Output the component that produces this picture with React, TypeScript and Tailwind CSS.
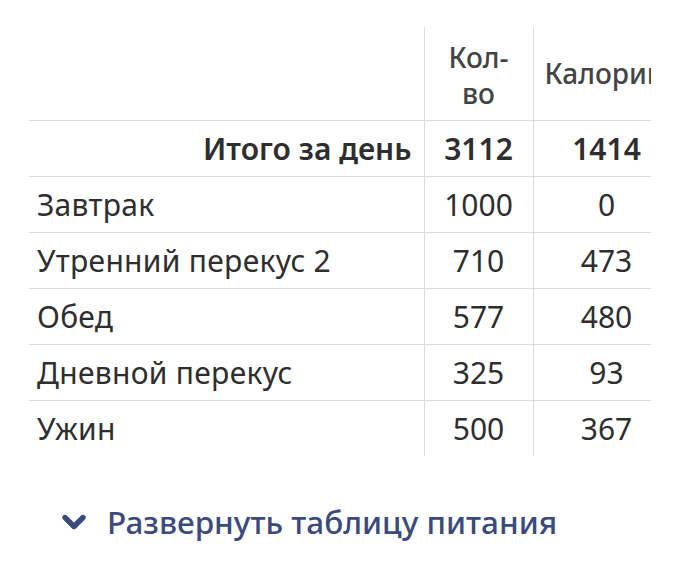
import { ChevronDown } from "lucide-react";

const meals = [
  { name: "Завтрак", qty: 1000, kcal: 0 },
  { name: "Утренний перекус 2", qty: 710, kcal: 473 },
  { name: "Обед", qty: 577, kcal: 480 },
  { name: "Дневной перекус", qty: 325, kcal: 93 },
  { name: "Ужин", qty: 500, kcal: 367 },
];

const App = () => {
  return (
    <div className="w-[680px] h-[561px] bg-white font-['Noto_Sans',sans-serif] text-[#2e2e2e]">
      <div className="pt-[27px] pl-[29px]">
        <div className="w-[622px] overflow-hidden">
          <table className="border-collapse table-fixed w-[680px] text-[30px]">
            <colgroup>
              <col className="w-[395px]" />
              <col className="w-[109px]" />
              <col className="w-[176px]" />
            </colgroup>
            <thead>
              <tr className="h-[93px] border-b border-[#d9dce1]">
                <th />
                <th className="border-l border-[#d9dce1] font-medium text-[#444] text-[28px] leading-[36px] text-center px-2 pt-1">
                  Кол-
                  <br />
                  во
                </th>
                <th className="border-l border-[#d9dce1] font-medium text-[#444] text-[28px] text-left pl-[11px] whitespace-nowrap">
                  Калории
                </th>
              </tr>
            </thead>
            <tbody>
              <tr className="h-[56px] border-b border-[#d9dce1] font-semibold">
                <td className="text-right pr-[12px]">Итого за день</td>
                <td className="border-l border-[#d9dce1] text-center">3112</td>
                <td className="border-l border-[#d9dce1] text-left">
                  <span className="inline-block w-[146px] text-center">1414</span>
                </td>
              </tr>
              {meals.map((m, i) => (
                <tr
                  key={m.name}
                  className={`h-[56px] ${i < meals.length - 1 ? "border-b border-[#d9dce1]" : ""}`}
                >
                  <td className="pl-2 whitespace-nowrap tracking-[0.3px]">{m.name}</td>
                  <td className="border-l border-[#d9dce1] text-center">{m.qty}</td>
                  <td className="border-l border-[#d9dce1] text-left">
                    <span className="inline-block w-[146px] text-center">{m.kcal}</span>
                  </td>
                </tr>
              ))}
            </tbody>
          </table>
        </div>
      </div>
      <div className="flex items-center gap-[15px] pl-[56px] mt-[42px]">
        <ChevronDown className="w-[36px] h-[36px] text-[#3b4a7c]" strokeWidth={3.6} />
        <span className="text-[31.5px] font-medium text-[#3b4a7c]">Развернуть таблицу питания</span>
      </div>
    </div>
  );
};

export default App;
